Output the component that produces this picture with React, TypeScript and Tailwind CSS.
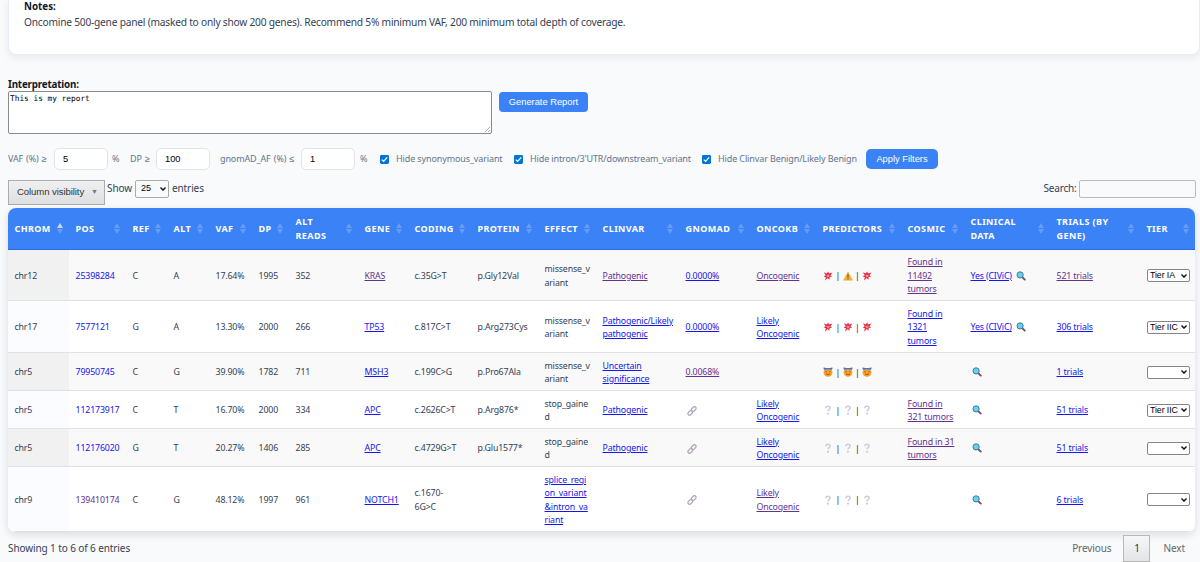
import React, { useState } from 'react';
import clsx from 'clsx';

type LinkTone = 'new' | 'visited' | 'none';

interface Cell {
  text: string;
  tone?: LinkTone;
}

interface Variant {
  chrom: string;
  pos: Cell;
  ref: string;
  alt: string;
  vaf: string;
  dp: string;
  altReads: string;
  gene: Cell;
  coding: string;
  protein: string;
  effect: Cell;
  clinvar: Cell;
  gnomad: Cell | null;
  oncokb: Cell;
  predictors: string[];
  cosmic: Cell;
  civic: boolean;
  trials: Cell;
  tier: string;
  height: string;
}

const columns = [
  { label: 'Chrom', width: 'w-[61px]' },
  { label: 'Pos', width: 'w-[57px]' },
  { label: 'Ref', width: 'w-[41px]' },
  { label: 'Alt', width: 'w-[42px]' },
  { label: 'VAF', width: 'w-[43px]' },
  { label: 'DP', width: 'w-[37px]' },
  { label: 'Alt\nReads', width: 'w-[69px]' },
  { label: 'Gene', width: 'w-[50px]' },
  { label: 'Coding', width: 'w-[63px]' },
  { label: 'Protein', width: 'w-[67px]' },
  { label: 'Effect', width: 'w-[58px]' },
  { label: 'Clinvar', width: 'w-[83px]' },
  { label: 'gnomAD', width: 'w-[71px]' },
  { label: 'OncoKB', width: 'w-[66px]' },
  { label: 'Predictors', width: 'w-[85px]' },
  { label: 'COSMIC', width: 'w-[63px]' },
  { label: 'Clinical\nData', width: 'w-[86px]' },
  { label: 'Trials (by\nGene)', width: 'w-[90px]' },
  { label: 'Tier', width: 'w-[55px]' },
];

const variants: Variant[] = [
  {
    chrom: 'chr12', pos: { text: '25398284', tone: 'new' }, ref: 'C', alt: 'A', vaf: '17.64%', dp: '1995', altReads: '352',
    gene: { text: 'KRAS', tone: 'visited' }, coding: 'c.35G>T', protein: 'p.Gly12Val', effect: { text: 'missense_v\nariant' },
    clinvar: { text: 'Pathogenic', tone: 'visited' }, gnomad: { text: '0.0000%', tone: 'new' }, oncokb: { text: 'Oncogenic', tone: 'visited' },
    predictors: ['boom', 'warning', 'boom'], cosmic: { text: 'Found in\n11492\ntumors', tone: 'visited' }, civic: true,
    trials: { text: '521 trials', tone: 'visited' }, tier: 'Tier IA', height: 'h-[51px]',
  },
  {
    chrom: 'chr17', pos: { text: '7577121', tone: 'new' }, ref: 'G', alt: 'A', vaf: '13.30%', dp: '2000', altReads: '266',
    gene: { text: 'TP53', tone: 'new' }, coding: 'c.817C>T', protein: 'p.Arg273Cys', effect: { text: 'missense_v\nariant' },
    clinvar: { text: 'Pathogenic/Likely\npathogenic', tone: 'new' }, gnomad: { text: '0.0000%', tone: 'new' }, oncokb: { text: 'Likely\nOncogenic', tone: 'new' },
    predictors: ['boom', 'boom', 'boom'], cosmic: { text: 'Found in\n1321\ntumors', tone: 'new' }, civic: true,
    trials: { text: '306 trials', tone: 'new' }, tier: 'Tier IIC', height: 'h-[52px]',
  },
  {
    chrom: 'chr5', pos: { text: '79950745', tone: 'new' }, ref: 'C', alt: 'G', vaf: '39.90%', dp: '1782', altReads: '711',
    gene: { text: 'MSH3', tone: 'new' }, coding: 'c.199C>G', protein: 'p.Pro67Ala', effect: { text: 'missense_v\nariant' },
    clinvar: { text: 'Uncertain\nsignificance', tone: 'new' }, gnomad: { text: '0.0068%', tone: 'visited' }, oncokb: { text: '' },
    predictors: ['angel', 'angel', 'angel'], cosmic: { text: '' }, civic: false,
    trials: { text: '1 trials', tone: 'new' }, tier: '', height: 'h-[38px]',
  },
  {
    chrom: 'chr5', pos: { text: '112173917', tone: 'new' }, ref: 'C', alt: 'T', vaf: '16.70%', dp: '2000', altReads: '334',
    gene: { text: 'APC', tone: 'new' }, coding: 'c.2626C>T', protein: 'p.Arg876*', effect: { text: 'stop_gaine\nd' },
    clinvar: { text: 'Pathogenic', tone: 'new' }, gnomad: null, oncokb: { text: 'Likely\nOncogenic', tone: 'new' },
    predictors: ['unknown', 'unknown', 'unknown'], cosmic: { text: 'Found in\n321 tumors', tone: 'visited' }, civic: false,
    trials: { text: '51 trials', tone: 'new' }, tier: 'Tier IIC', height: 'h-[38px]',
  },
  {
    chrom: 'chr5', pos: { text: '112176020', tone: 'new' }, ref: 'G', alt: 'T', vaf: '20.27%', dp: '1406', altReads: '285',
    gene: { text: 'APC', tone: 'new' }, coding: 'c.4729G>T', protein: 'p.Glu1577*', effect: { text: 'stop_gaine\nd' },
    clinvar: { text: 'Pathogenic', tone: 'new' }, gnomad: null, oncokb: { text: 'Likely\nOncogenic', tone: 'new' },
    predictors: ['unknown', 'unknown', 'unknown'], cosmic: { text: 'Found in 31\ntumors', tone: 'visited' }, civic: false,
    trials: { text: '51 trials', tone: 'new' }, tier: '', height: 'h-[38px]',
  },
  {
    chrom: 'chr9', pos: { text: '139410174', tone: 'visited' }, ref: 'C', alt: 'G', vaf: '48.12%', dp: '1997', altReads: '961',
    gene: { text: 'NOTCH1', tone: 'new' }, coding: 'c.1670-\n6G>C', protein: '', effect: { text: 'splice_regi\non_variant\n&intron_va\nriant', tone: 'new' },
    clinvar: { text: '' }, gnomad: null, oncokb: { text: 'Likely\nOncogenic', tone: 'visited' },
    predictors: ['unknown', 'unknown', 'unknown'], cosmic: { text: '' }, civic: false,
    trials: { text: '6 trials', tone: 'new' }, tier: '', height: 'h-[65px]',
  },
];

const PredictorIcon = ({ kind }: { kind: string }) => {
  if (kind === 'boom') {
    return (
      <svg viewBox="0 0 10 10" className="h-2.5 w-2.5 shrink-0">
        <path d="M.8 1.3 3.7 2.6 5.2.4 6 2.5 9.5 1.6 7.4 4.2 9.2 5.6 6.7 6 6.4 8.8 4.8 7 2 9.6 2.9 6.2.5 5.2 2.8 4.2Z" fill="#e8205a" />
        <path d="m4.9 2.9.7 1.2 1.5.1-.9 1 .1 1.3-1.3-.6-1.3.5.3-1.3-.9-1 1.4-.1Z" fill="#ff9c37" />
      </svg>
    );
  }
  if (kind === 'warning') {
    return (
      <svg viewBox="0 0 10 10" className="h-2.5 w-2.5 shrink-0">
        <path d="M5 1 9.5 9.2H.5Z" fill="#ffb02e" stroke="#efa43a" strokeWidth=".5" strokeLinejoin="round" />
        <path d="M5 3.6v3M5 7.3v1" stroke="#5c4632" strokeWidth="1.1" />
      </svg>
    );
  }
  if (kind === 'angel') {
    return (
      <svg viewBox="0 0 10 10" className="h-2.5 w-2.5 shrink-0">
        <circle cx="5" cy="5.4" r="4.4" fill="#f9a22b" />
        <path d="M2.4 4.9q.7-.8 1.4 0M6.2 4.9q.7-.8 1.4 0M3 6.8q2 1.6 4 0" fill="none" stroke="#683b24" strokeWidth=".7" />
        <path d="M.3.8q.7-.8 1.6 0 3.1.9 6.2 0 .9-.8 1.6 0L9 2.700Q5 1.900 1 2.700Z" fill="#3c72d8" />
      </svg>
    );
  }
  return (
    <svg viewBox="0 0 10 10" className="h-2.5 w-2.5 shrink-0">
      <path d="M2.9 3.2C2.9.6 7.1.6 7.1 3.1 7.1 4.7 5 4.7 5 6.6" fill="none" stroke="#d2cadd" strokeWidth="1.5" />
      <circle cx="5" cy="8.7" r=".9" fill="#c4b6d3" />
    </svg>
  );
};

const Magnifier = () => (
  <svg viewBox="0 0 10 10" className="inline-block h-2.5 w-2.5 shrink-0">
    <path d="m6.3 6.2 2.5 2.400" stroke="#81486f" strokeWidth="1.9" strokeLinecap="round" />
    <circle cx="4.1" cy="3.9" r="3.1" fill="#62d3f5" stroke="#4c7596" strokeWidth="1" />
  </svg>
);

const ChainLink = () => (
  <svg viewBox="0 0 10 10" className="-mt-[1px] ml-[1px] h-2.5 w-2.5" fill="none" stroke="#b5a6ba" strokeWidth="1.3" strokeLinecap="round">
    <rect x="4" y="1.5" width="5.400" height="3.3" rx="1.6" transform="rotate(-45 6.700 3.150)" />
    <rect x=".6" y="5.2" width="5.400" height="3.3" rx="1.6" transform="rotate(-45 3.300 6.850)" />
  </svg>
);

const SortArrows = ({ active }: { active: boolean }) => (
  <svg viewBox="0 0 6 11" className="h-[11px] w-1.5 shrink-0">
    <path d="M3 0 6 5H0Z" fill={active ? '#c5dafb' : '#649cf8'} />
    <path d="M0 6h6L3 11Z" fill="#649cf8" />
  </svg>
);

const Chevron = ({ className }: { className?: string }) => (
  <svg viewBox="0 0 6 4" className={clsx('pointer-events-none absolute h-1 w-1.5', className)} fill="none" stroke="#111" strokeWidth="1.4">
    <path d="m.5.6 2.5 2.5L5.500.6" />
  </svg>
);

const CellText = ({ cell, plain }: { cell: Cell; plain?: boolean }) => {
  if (!cell.tone) return <>{cell.text}</>;
  return (
    <a
      className={clsx(
        'cursor-pointer',
        cell.tone === 'visited' ? 'text-[#65318f]' : 'text-[#1515ee]',
        !plain && 'underline'
      )}
    >
      {cell.text}
    </a>
  );
};

const TierSelect = ({ value }: { value: string }) => {
  const [tier, setTier] = useState(value);
  return (
    <div className="relative -mt-[2px] h-[13px] w-[43px]">
      <select
        value={tier}
        onChange={(e) => setTier(e.target.value)}
        className="block h-[13px] w-[43px] appearance-none rounded-[2px] border border-[#858585] bg-white pl-[2.5px] font-['Liberation_Sans',sans-serif] text-[8.8px] leading-[11px] tracking-[-0.08px] text-black"
      >
        <option value=""></option>
        <option>Tier IA</option>
        <option>Tier IIC</option>
      </select>
      <Chevron className="right-[2.5px] top-[4.5px]" />
    </div>
  );
};

const FilterInput = ({ value, className }: { value: string; className?: string }) => (
  <input
    defaultValue={value}
    className={clsx(
      "h-[22px] w-[54px] rounded-[5px] border border-[#e0e4ea] bg-white px-2 font-['Liberation_Sans',sans-serif] text-[9.3px] tracking-normal text-black",
      className
    )}
  />
);

const FilterCheck = ({ label, className }: { label: string; className?: string }) => (
  <label className={clsx('flex items-center whitespace-nowrap', className)}>
    <svg viewBox="0 0 9 9" className="mr-[7px] h-[9px] w-[9px]">
      <rect width="9" height="9" rx="1.4" fill="#0075d5" />
      <path d="m1.8 4.6 1.8 1.8 3.600-4" fill="none" stroke="#fff" strokeWidth="1.3" />
    </svg>
    {label}
  </label>
);

export default function App() {
  return (
    <div className="h-[562px] w-[1200px] overflow-hidden bg-[#f8fafc] px-2 font-['Noto_Sans',sans-serif] text-[#334155]">
      {/* Notes card */}
      <section className="-mr-2 h-[56px] rounded-b-lg border border-t-0 border-[#e8edf3] bg-white pl-[15px] text-[10.2px] leading-[15px] shadow-[0_3px_8px_rgba(15,23,42,0.07)]">
        <div className="-mt-[1px] text-[9.8px] font-bold text-[#0f172a]">Notes:</div>
        <p className="pt-[0.5px] tracking-[-0.22px]">
          Oncomine 500-gene panel (masked to only show 200 genes). Recommend 5% minimum VAF, 200 minimum total depth of coverage.
        </p>
      </section>

      {/* Interpretation */}
      <section className="mt-[22px]">
        <div className="h-[14px] text-[9.8px] font-bold leading-[15px] tracking-[-0.18px] text-[#0f172a]">Interpretation:</div>
        <div className="flex items-start gap-[7px]">
          <div className="relative">
            <textarea
              defaultValue="This is my report"
              className="block h-[43px] w-[484px] resize-none rounded-[2px] border border-[#8b8b8b] bg-white px-[1px] py-[2px] font-['DejaVu_Sans_Mono',monospace] text-[7.8px] leading-[10px] text-black"
            />
            <svg viewBox="0 0 5 5" className="absolute bottom-[2px] right-[2px] h-[5px] w-[5px]" stroke="#777" strokeWidth=".6">
              <path d="M0 5 5 0M3 5l2-2" />
            </svg>
          </div>
          <button className="mt-[1px] flex h-5 w-[89px] items-center justify-center rounded-[4px] bg-[#3b82f6] pt-[1px] font-['Liberation_Sans',sans-serif] text-[9.3px] font-medium text-white">
            Generate Report
          </button>
        </div>
      </section>

      {/* Filters */}
      <section className="mt-[14px] flex h-[22px] items-center text-[9px] tracking-[-0.12px] text-[#64748b]">
        <span className="w-[46px] whitespace-nowrap [word-spacing:0.8px]">VAF (%) ≥</span>
        <FilterInput value="5" />
        <span className="ml-[4px] w-[18px]">%</span>
        <span className="w-[26px] whitespace-nowrap [word-spacing:1px]">DP ≥</span>
        <FilterInput value="100" />
        <span className="ml-[10px] w-[81px] whitespace-nowrap [word-spacing:1px]">gnomAD_AF (%) ≤</span>
        <FilterInput value="1" />
        <span className="ml-[5px] w-[20px]">%</span>
        <FilterCheck label="Hide synonymous_variant" className="w-[134px]" />
        <FilterCheck label="Hide intron/3'UTR/downstream_variant" className="w-[188px]" />
        <FilterCheck label="Hide Clinvar Benign/Likely Benign" className="w-[164px]" />
        <button className="flex h-5 w-[72px] items-center justify-center rounded-[5px] bg-[#3b82f6] pt-[1px] font-['Liberation_Sans',sans-serif] text-[9.3px] font-medium tracking-normal text-white">
          Apply Filters
        </button>
      </section>

      {/* Table toolbar */}
      <section className="mt-[10px] flex h-[28px] items-start justify-between text-[10px] tracking-[-0.1px]">
        <div className="flex items-start">
          <button className="flex h-[25px] w-[97px] items-center gap-[7px] whitespace-nowrap border border-[#acacac] bg-linear-to-b from-[#f0f0f1] to-[#dedfe0] pl-[8px] font-['Liberation_Sans',sans-serif] text-[9.6px] tracking-[-0.1px] text-[#333]">
            Column visibility
            <span className="text-[7px] text-[#777]">▼</span>
          </button>
          <label className="ml-[2px] flex h-[17px] items-center">
            Show
            <span className="relative mx-[3px]">
              <select className="block h-[18px] w-[34px] appearance-none rounded-[2px] border border-[#aaa] bg-transparent pl-[5px] font-['Liberation_Sans',sans-serif] text-[9px] tracking-normal text-black">
                <option>25</option>
                <option>50</option>
              </select>
              <Chevron className="right-[3px] top-[7px]" />
            </span>
            entries
          </label>
        </div>
        <label className="-mr-[3.5px] flex h-[17px] items-center gap-[2px] tracking-[-0.2px]">
          Search:
          <input className="h-[18px] w-[117px] rounded-[2px] border border-[#b9bcbf] bg-transparent" />
        </label>
      </section>

      {/* Variant table */}
      <div className="w-[1187px] overflow-hidden rounded-lg bg-white shadow-[0_3px_8px_rgba(15,23,42,0.12)]">
        <table className="w-[1187px] table-fixed border-separate border-spacing-0">
          <thead>
            <tr className="h-[42px] bg-[#3b82f6]">
              {columns.map((col, i) => (
                <th key={col.label} className={clsx('border-b border-[#2b6fdf] py-0 pl-[6.5px] pr-[6.5px] text-left', col.width)}>
                  <div className="flex items-center justify-between">
                    <span className="whitespace-pre text-[9px] font-bold uppercase leading-[14px] tracking-[0.42px] text-white">{col.label}</span>
                    <SortArrows active={i === 0} />
                  </div>
                </th>
              ))}
            </tr>
          </thead>
          <tbody className="text-[8.8px] leading-[13.5px] tracking-[-0.15px]">
            {variants.map((v, i) => (
              <tr
                key={v.pos.text}
                className={clsx(
                  'whitespace-pre [&>td]:border-b [&>td]:border-[#dfe1e4] [&>td]:pb-0 [&>td]:pl-[6.5px] [&>td]:pt-[3px]',
                  v.height,
                  i % 2 === 0 ? 'bg-[#f9f9f9]' : 'bg-white',
                  v.chrom === 'chr9' && 'bg-white'
                )}
              >
                <td className={i % 2 === 0 ? 'bg-[#f1f1f1]' : 'bg-[#fafcff]'}>{v.chrom}</td>
                <td><CellText cell={v.pos} plain /></td>
                <td>{v.ref}</td>
                <td>{v.alt}</td>
                <td>{v.vaf}</td>
                <td>{v.dp}</td>
                <td>{v.altReads}</td>
                <td><CellText cell={v.gene} /></td>
                <td>{v.coding}</td>
                <td>{v.protein}</td>
                <td><CellText cell={v.effect} /></td>
                <td><CellText cell={v.clinvar} /></td>
                <td>{v.gnomad ? <CellText cell={v.gnomad} /> : <ChainLink />}</td>
                <td><CellText cell={v.oncokb} /></td>
                <td>
                  <div className="-mt-[2px] flex items-center pl-[0.5px]">
                    {v.predictors.map((kind, n) => (
                      <React.Fragment key={n}>
                        {n > 0 && <span className="w-[9.6px] pt-[1px] text-center text-[9.5px] text-[#283b5d]">|</span>}
                        <PredictorIcon kind={kind} />
                      </React.Fragment>
                    ))}
                  </div>
                </td>
                <td><CellText cell={v.cosmic} /></td>
                <td>
                  <div className="flex items-center">
                    {v.civic && <span className="w-[44.5px]"><CellText cell={{ text: 'Yes (CIViC)', tone: 'new' }} /></span>}
                    <span className="-mt-[2px] ml-[1px] flex"><Magnifier /></span>
                  </div>
                </td>
                <td><CellText cell={v.trials} /></td>
                <td><TierSelect value={v.tier} /></td>
              </tr>
            ))}
          </tbody>
        </table>
      </div>

      {/* Footer and paging */}
      <footer className="mt-[3px] flex items-start justify-between text-[10px] tracking-[-0.1px]">
        <div className="pt-[6px] leading-[15px]">Showing 1 to 6 of 6 entries</div>
        <nav className="flex items-center text-[#666]">
          <span>Previous</span>
          <button className="ml-3 mr-[13px] h-[27px] w-[27px] border border-[#b8b8b8] bg-linear-to-b from-[#f6f7f9] to-[#e3e4e6] text-[#333]">1</button>
          <span className="pr-[7px]">Next</span>
        </nav>
      </footer>
    </div>
  );
}
